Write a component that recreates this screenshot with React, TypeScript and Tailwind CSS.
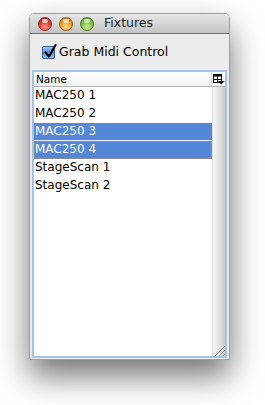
import React from 'react';

const fixtures = [
  { name: 'MAC250 1', selected: false, focused: false },
  { name: 'MAC250 2', selected: false, focused: false },
  { name: 'MAC250 3', selected: true, focused: false },
  { name: 'MAC250 4', selected: true, focused: true },
  { name: 'StageScan 1', selected: false, focused: false },
  { name: 'StageScan 2', selected: false, focused: false },
];

function TrafficLight({ tone }: { tone: 'red' | 'yellow' | 'green' }) {
  const fill = {
    red: 'bg-[radial-gradient(circle_at_50%_75%,#ff9d8f_0%,#e2453a_45%,#9c1a12_100%)] border-[#8a2a22]',
    yellow: 'bg-[radial-gradient(circle_at_50%_75%,#ffe29a_0%,#f0a52a_45%,#b36a0a_100%)] border-[#97621a]',
    green: 'bg-[radial-gradient(circle_at_50%_75%,#d4f59e_0%,#87c543_45%,#4c8a17_100%)] border-[#52802a]',
  }[tone];
  return (
    <div className={`relative w-[14px] h-[14px] rounded-full border ${fill}`}>
      <div className="absolute left-[3px] top-[1px] w-[6px] h-[4px] rounded-full bg-white/70" />
    </div>
  );
}

function Checkbox() {
  return (
    <div className="relative w-[13px] h-[13px] rounded-[2px] border border-[#3a5f93] bg-gradient-to-b from-[#9cc7f4] via-[#4f8fe0] to-[#8ec0f2]">
      <svg className="absolute -top-[3px] left-[1px]" width="13" height="15" viewBox="0 0 13 15">
        <path d="M1.5 8.5 L5 12.5 L11.5 1" fill="none" stroke="#000" strokeWidth="2.2" strokeLinecap="round" strokeLinejoin="round" />
      </svg>
    </div>
  );
}

function ColumnsIcon() {
  return (
    <svg width="12" height="11" viewBox="0 0 12 11">
      <rect x="0.5" y="0.5" width="8" height="8" fill="#fff" stroke="#000" />
      <rect x="0.5" y="0.5" width="8" height="2" fill="#000" />
      <line x1="4.5" y1="2" x2="4.5" y2="9" stroke="#000" />
      <line x1="1" y1="5.5" x2="8" y2="5.5" stroke="#000" />
      <path d="M5 7 L11.5 7 L8.25 10.5 Z" fill="#000" />
    </svg>
  );
}

function ResizeGrip() {
  return (
    <svg width="11" height="11" viewBox="0 0 11 11">
      <line x1="1" y1="11" x2="11" y2="1" stroke="#8a8a8a" />
      <line x1="5" y1="11" x2="11" y2="5" stroke="#8a8a8a" />
      <line x1="9" y1="11" x2="11" y2="9" stroke="#8a8a8a" />
    </svg>
  );
}

export default function App() {
  return (
    <div className="w-[265px] h-[405px] bg-white pl-[29px] pt-[13px] font-['DejaVu_Sans',sans-serif] text-black">
      <div className="w-[201px] h-[347px] flex flex-col rounded-t-[5px] overflow-hidden border border-[#a0a0a0] bg-[#ececec] shadow-[0_16px_32px_rgba(0,0,0,0.55)]">
        {/* title bar */}
        <div className="h-[20px] flex items-center border-b border-[#6f6f6f] bg-gradient-to-b from-[#e6e6e6] to-[#c4c4c4] pl-[8px]">
          <div className="flex gap-[7px]">
            <TrafficLight tone="red" />
            <TrafficLight tone="yellow" />
            <TrafficLight tone="green" />
          </div>
          <span className="ml-[10px] text-[12.5px] leading-none text-[#222]">Fixtures</span>
        </div>

        {/* checkbox row */}
        <div className="h-[36px] flex items-center pl-[12px] gap-[4px]">
          <Checkbox />
          <span className="text-[12.5px] leading-none">Grab Midi Control</span>
        </div>

        {/* table */}
        <div className="flex-1 mx-[2px] mb-[1px] border-2 border-[#a4c1e6] bg-white flex flex-col">
          <div className="flex h-[15px] border-b border-[#b4b4b4] bg-gradient-to-b from-white to-[#f1f1f1]">
            <div className="flex-1 pl-[2px] text-[10.5px] leading-[14px] border-r border-[#d4d4d4]">Name</div>
            <div className="w-[13px] flex items-center justify-center pt-[1px]">
              <ColumnsIcon />
            </div>
          </div>
          <div className="flex-1 flex">
            <div className="flex-1 flex flex-col">
              {fixtures.map((f) => (
                <div
                  key={f.name}
                  className={`h-[18px] pl-[1px] text-[12px] leading-[17px] ${
                    f.selected ? 'bg-[#5487d8] text-white' : ''
                  } ${f.focused ? 'shadow-[inset_0_0_0_1px_#8c8c8c]' : ''} ${
                    f.selected && !f.focused ? 'border-b border-[#e6ecf5]' : ''
                  }`}
                >
                  {f.name}
                </div>
              ))}
            </div>
            <div className="w-[13px] flex flex-col justify-end items-end bg-gradient-to-r from-[#f7f7f7] via-[#e3e3e3] to-[#c9c9c9] border-l border-[#dcdcdc]">
              <ResizeGrip />
            </div>
          </div>
        </div>
      </div>
    </div>
  );
}
